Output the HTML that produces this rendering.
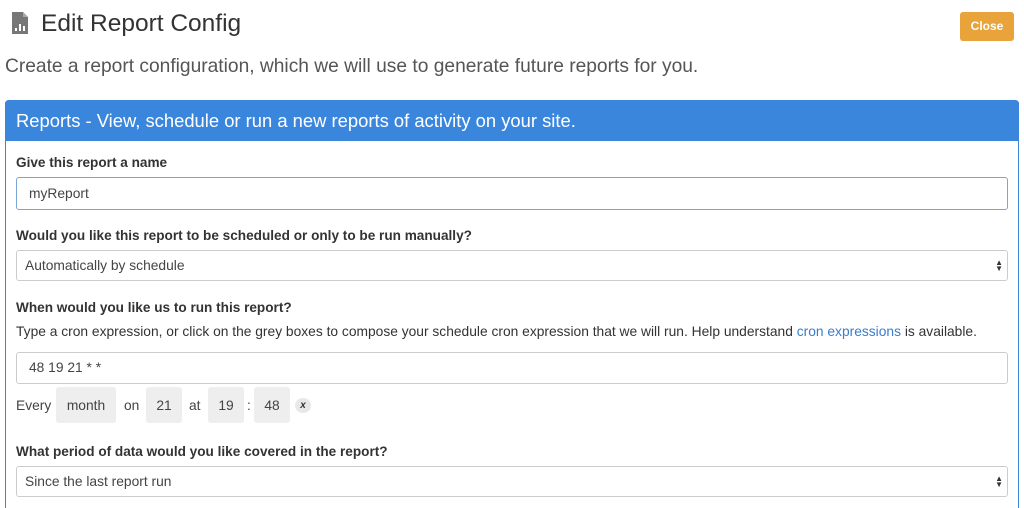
<!DOCTYPE html><html style="overflow:hidden;height:508px"><head><style>
body{margin:0;width:1024px;height:508px;overflow:hidden;background:#fff;font-family:"Liberation Sans",sans-serif;color:#333;position:relative}
.a{position:absolute}
.lbl{font-size:13.6px;font-weight:bold;color:#333}
.inp{position:absolute;left:16px;width:992px;height:31px;border:1px solid #ccc;border-radius:3px;box-sizing:border-box;font-size:13.8px;padding:0 12px;line-height:30px;color:#444}
.sel{padding-left:8px}
.arr{position:absolute;right:4px;top:9px;font-size:8px;line-height:6px;color:#333}
.box{position:absolute;top:387px;height:36px;background:#eee;border-radius:3px;font-size:13.8px;line-height:37px;text-align:center;color:#444}
.t{position:absolute;top:398px;font-size:13.8px;color:#444}
</style></head><body>
<svg class="a" style="left:12px;top:12px" width="16" height="22" viewBox="0 0 16 22"><path d="M0 0H11L16 5V22H0Z" fill="#777"/><path d="M11 0V5H16" fill="#aaa"/><rect x="3" y="16" width="2" height="3" fill="#fff"/><rect x="7" y="12" width="2" height="7" fill="#fff"/><rect x="11" y="14" width="2" height="5" fill="#fff"/></svg>
<div class="a" style="left:41px;top:10px;font-size:24.5px;color:#333">Edit Report Config</div>
<div class="a" style="left:960px;top:12px;width:54px;height:29px;background:#e8a33a;border-radius:3px;color:#fff;font-size:12px;font-weight:bold;text-align:center;line-height:29px">Close</div>
<div class="a" style="left:5px;top:56px;font-size:19.2px;color:#555">Create a report configuration, which we will use to generate future reports for you.</div>
<div class="a" style="left:5px;top:100px;width:1014px;height:408px;border:1px solid #3b86dd;border-bottom:none;border-radius:4px 4px 0 0;box-sizing:border-box"></div>
<div class="a" style="left:5px;top:100px;width:1014px;height:41px;background:#3b86dd;border-radius:4px 4px 0 0;color:#fff;font-size:18.4px;line-height:41px;padding-left:11px;box-sizing:border-box;white-space:nowrap">Reports - View, schedule or run a new reports of activity on your site.</div>
<div class="a lbl" style="left:16px;top:155px">Give this report a name</div>
<div class="inp" style="top:177px;height:33px;border-color:#7aa7d8;line-height:32px">myReport</div>
<div class="a lbl" style="left:16px;top:228px">Would you like this report to be scheduled or only to be run manually?</div>
<div class="inp sel" style="top:250px">Automatically by schedule<div class="arr">▲<br>▼</div></div>
<div class="a lbl" style="left:16px;top:300px">When would you like us to run this report?</div>
<div class="a" style="left:16px;top:324px;font-size:13.8px;color:#333;white-space:nowrap">Type a cron expression, or click on the grey boxes to compose your schedule cron expression that we will run. Help understand <span style="color:#3a7dc9">cron expressions</span> is available.</div>
<div class="inp" style="top:352px;height:32px">48 19 21 * *</div>
<div class="t" style="left:16px">Every</div>
<div class="box" style="left:56px;width:60px">month</div>
<div class="t" style="left:124px">on</div>
<div class="box" style="left:146px;width:36px">21</div>
<div class="t" style="left:189px">at</div>
<div class="box" style="left:208px;width:36px">19</div>
<div class="t" style="left:247px">:</div>
<div class="box" style="left:254px;width:36px">48</div>
<div class="a" style="left:295px;top:398px;width:16px;height:15px;border-radius:8px;background:#e8e8e8;font-size:10px;font-weight:bold;text-align:center;line-height:15px;font-style:italic">x</div>
<div class="a lbl" style="left:16px;top:444px">What period of data would you like covered in the report?</div>
<div class="inp sel" style="top:466px">Since the last report run<div class="arr">▲<br>▼</div></div>
</body></html>
